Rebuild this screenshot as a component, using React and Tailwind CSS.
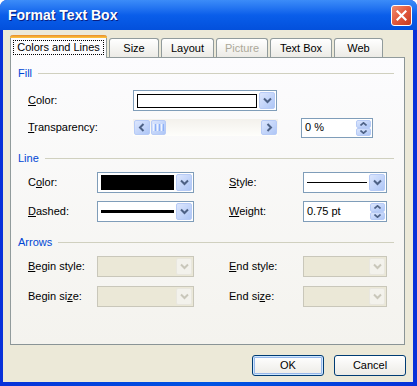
import React from "react";

const FONT = { fontFamily: '"Liberation Sans", Arial, sans-serif' };

const Mn = ({ text, u }) => (
  <>
    {text.slice(0, u)}
    <span className="underline underline-offset-[1px]">{text[u]}</span>
    {text.slice(u + 1)}
  </>
);

const Chevron = ({ disabled, dir = "down" }) => {
  const d = {
    down: "M1 1.5 L4.5 5 L8 1.5",
    left: "M5.5 1 L2 4.5 L5.5 8",
    right: "M2.5 1 L6 4.5 L2.5 8",
  }[dir];
  const box = dir === "down" ? "0 0 9 7" : "0 0 8 9";
  return (
    <svg width={dir === "down" ? 9 : 8} height={dir === "down" ? 7 : 9} viewBox={box}>
      <path d={d} fill="none" stroke={disabled ? "#C9C7BA" : "#4D6185"} strokeWidth="2" />
    </svg>
  );
};

const XpButton = ({ disabled, className = "", children }) => (
  <div
    className={`flex items-center justify-center rounded-[2px] border ${
      disabled
        ? "border-[#E9E7DF] bg-[#F3F2EC]"
        : "border-[#B7CBF6] bg-gradient-to-br from-[#DCE6FD] to-[#AEC6F6]"
    } ${className}`}
  >
    {children}
  </div>
);

const Combo = ({ className = "", disabled, children }) => (
  <div
    className={`flex h-[21px] border p-px ${
      disabled ? "border-[#C9C7BA] bg-[#EBE8D7]" : "border-[#7F9DB9] bg-white"
    } ${className}`}
  >
    <div className="flex min-w-0 flex-1 items-center px-[2px]">{children}</div>
    <XpButton disabled={disabled} className="w-[16px]">
      <Chevron disabled={disabled} />
    </XpButton>
  </div>
);

const SpinArrow = ({ up }) => (
  <svg width="7" height="4" viewBox="0 0 7 4">
    <path d={up ? "M0.5 3.5 L3.5 0.8 L6.5 3.5" : "M0.5 0.5 L3.5 3.2 L6.5 0.5"} fill="none" stroke="#4D6185" strokeWidth="1.6" />
  </svg>
);

const Spinner = ({ className = "", value }) => (
  <div className={`flex h-[20px] border border-[#7F9DB9] bg-white p-px ${className}`}>
    <div className="flex flex-1 items-center px-[2px] text-[11px] text-black">{value}</div>
    <div className="flex w-[15px] flex-col">
      <XpButton className="flex-1">
        <SpinArrow up />
      </XpButton>
      <XpButton className="flex-1">
        <SpinArrow />
      </XpButton>
    </div>
  </div>
);

const Scrollbar = () => (
  <div className="flex h-[17px] w-[145px] bg-gradient-to-b from-[#F3F1EC] to-[#FEFEFB] p-px">
    <XpButton className="w-[16px]">
      <Chevron dir="left" />
    </XpButton>
    <XpButton className="ml-px w-[15px] gap-px">
      <span className="h-[7px] w-px bg-[#EEF4FE]" />
      <span className="h-[7px] w-px bg-[#8CB0F8]" />
      <span className="h-[7px] w-px bg-[#EEF4FE]" />
      <span className="h-[7px] w-px bg-[#8CB0F8]" />
      <span className="h-[7px] w-px bg-[#EEF4FE]" />
      <span className="h-[7px] w-px bg-[#8CB0F8]" />
    </XpButton>
    <div className="flex-1" />
    <XpButton className="w-[16px]">
      <Chevron dir="right" />
    </XpButton>
  </div>
);

const SectionHeader = ({ label, className = "" }) => (
  <div className={`flex h-[14px] items-center pl-[7px] pr-[10px] ${className}`}>
    <span className="text-[11px] text-[#0046D5]">{label}</span>
    <div className="ml-[6px] h-px flex-1 bg-[#D0D0BF]" />
  </div>
);

const Label = ({ className = "", children }) => (
  <span className={`text-[11px] text-black ${className}`}>{children}</span>
);

const TABS = [
  { name: "Colors and Lines", w: "w-[97px]", active: true },
  { name: "Size", w: "w-[50px]" },
  { name: "Layout", w: "w-[53px]" },
  { name: "Picture", w: "w-[52px]", disabled: true },
  { name: "Text Box", w: "w-[62px]" },
  { name: "Web", w: "w-[49px]" },
];

const Tabs = () => (
  <div className="flex h-[22px] items-end">
    {TABS.map((tab) =>
      tab.active ? (
        <div
          key={tab.name}
          className={`relative z-10 -mb-px flex h-[23px] ${tab.w} flex-col rounded-t-[3px] border-x border-[#919B9C] bg-[#FCFCFE]`}
        >
          <div className="-mx-px h-[3px] rounded-t-[3px] bg-gradient-to-b from-[#E68B2C] to-[#FFC73C]" />
          <div className="flex flex-1 items-center justify-center pb-[2px]">
            <span className="border border-dotted border-black px-[3px] text-[11px] leading-[13px] text-black">
              {tab.name}
            </span>
          </div>
        </div>
      ) : (
        <div
          key={tab.name}
          className={`ml-[2px] flex h-[19px] ${tab.w} items-center justify-center rounded-t-[3px] border border-b-0 border-[#919B9C] bg-gradient-to-b from-[#FFFFFF] to-[#ECEBE6] text-[11px] ${
            tab.disabled ? "text-[#ACA899]" : "text-black"
          }`}
        >
          {tab.name}
        </div>
      ),
    )}
  </div>
);

const CloseButton = () => (
  <div className="flex h-[21px] w-[21px] items-center justify-center rounded-[3px] border border-white bg-gradient-to-br from-[#F08B6E] via-[#E2583C] to-[#C73A1E]">
    <svg width="11" height="11" viewBox="0 0 11 11">
      <path d="M1.5 1.5 L9.5 9.5 M9.5 1.5 L1.5 9.5" stroke="white" strokeWidth="2.2" strokeLinecap="square" />
    </svg>
  </div>
);

const DialogButton = ({ children, def }) => (
  <div
    className={`flex h-[21px] w-[72px] items-center justify-center rounded-[3px] border border-[#003C74] bg-gradient-to-b from-[#FFFFFF] to-[#ECEBE6] text-[11px] text-black ${
      def ? "shadow-[inset_0_0_0_1px_#CEE7FF,inset_0_0_0_2px_#98B8EA]" : ""
    }`}
  >
    {children}
  </div>
);

export default function App() {
  return (
    <div className="h-[386px] w-[417px] bg-white" style={FONT}>
      <div className="flex h-full flex-col rounded-t-[7px] bg-gradient-to-r from-[#0831D9] via-[#0054E3] to-[#0831D9]">
        {/* title bar */}
        <div className="flex h-[30px] items-center rounded-t-[7px] bg-gradient-to-b from-[#3C8CF8] via-[#0A5EEA] to-[#0350DC] pl-[8px] pr-[5px]">
          <span className="flex-1 text-[14px] font-bold text-white [text-shadow:1px_1px_0_#0A1E80]">
            Format Text Box
          </span>
          <CloseButton />
        </div>

        {/* body */}
        <div className="mb-[4px] ml-[3px] mr-[4px] flex flex-1 flex-col bg-[#ECE9D8] pl-[7px] pr-[8px] pt-[5px]">
          <Tabs />
          <div className="flex h-[288px] flex-col border border-[#919B9C] border-r-[#8A9496] border-b-[#8A9496] bg-gradient-to-b from-[#FCFCFE] to-[#F4F3EE] pt-[8px]">
            <SectionHeader label="Fill" />

            <div className="mt-[10px] flex h-[21px] items-center pl-[17px]">
              <Label className="w-[105px]">
                <Mn text="Color:" u={0} />
              </Label>
              <Combo className="w-[144px]">
                <div className="h-[14px] w-full border border-black bg-white" />
              </Combo>
            </div>

            <div className="mt-[7px] flex h-[19px] items-center pl-[17px]">
              <Label className="w-[105px]">
                <Mn text="Transparency:" u={0} />
              </Label>
              <Scrollbar />
              <Spinner className="ml-[23px] w-[72px]" value="0 %" />
            </div>

            <SectionHeader label="Line" className="mt-[14px]" />

            <div className="mt-[7px] flex h-[21px] items-center pl-[17px]">
              <Label className="w-[69px]">
                <Mn text="Color:" u={1} />
              </Label>
              <Combo className="w-[97px]">
                <div className="h-[15px] w-full bg-black" />
              </Combo>
              <Label className="ml-[35px] w-[74px]">
                <Mn text="Style:" u={0} />
              </Label>
              <Combo className="w-[84px]">
                <div className="h-px w-full bg-black" />
              </Combo>
            </div>

            <div className="mt-[8px] flex h-[21px] items-center pl-[17px]">
              <Label className="w-[69px]">
                <Mn text="Dashed:" u={0} />
              </Label>
              <Combo className="w-[97px]">
                <div className="h-[3px] w-full bg-black" />
              </Combo>
              <Label className="ml-[35px] w-[74px]">
                <Mn text="Weight:" u={0} />
              </Label>
              <Spinner className="h-[21px] w-[84px]" value="0.75 pt" />
            </div>

            <SectionHeader label="Arrows" className="mt-[13px]" />

            <div className="mt-[7px] flex h-[21px] items-center pl-[17px]">
              <Label className="w-[69px]">
                <Mn text="Begin style:" u={0} />
              </Label>
              <Combo className="w-[97px]" disabled />
              <Label className="ml-[35px] w-[74px]">
                <Mn text="End style:" u={0} />
              </Label>
              <Combo className="w-[84px]" disabled />
            </div>

            <div className="mt-[9px] flex h-[21px] items-center pl-[17px]">
              <Label className="w-[69px]">
                <Mn text="Begin size:" u={8} />
              </Label>
              <Combo className="w-[97px]" disabled />
              <Label className="ml-[35px] w-[74px]">
                <Mn text="End size:" u={6} />
              </Label>
              <Combo className="w-[84px]" disabled />
            </div>
          </div>

          <div className="-mr-px mt-[10px] flex justify-end gap-[10px]">
            <DialogButton def>OK</DialogButton>
            <DialogButton>Cancel</DialogButton>
          </div>
        </div>
      </div>
    </div>
  );
}
